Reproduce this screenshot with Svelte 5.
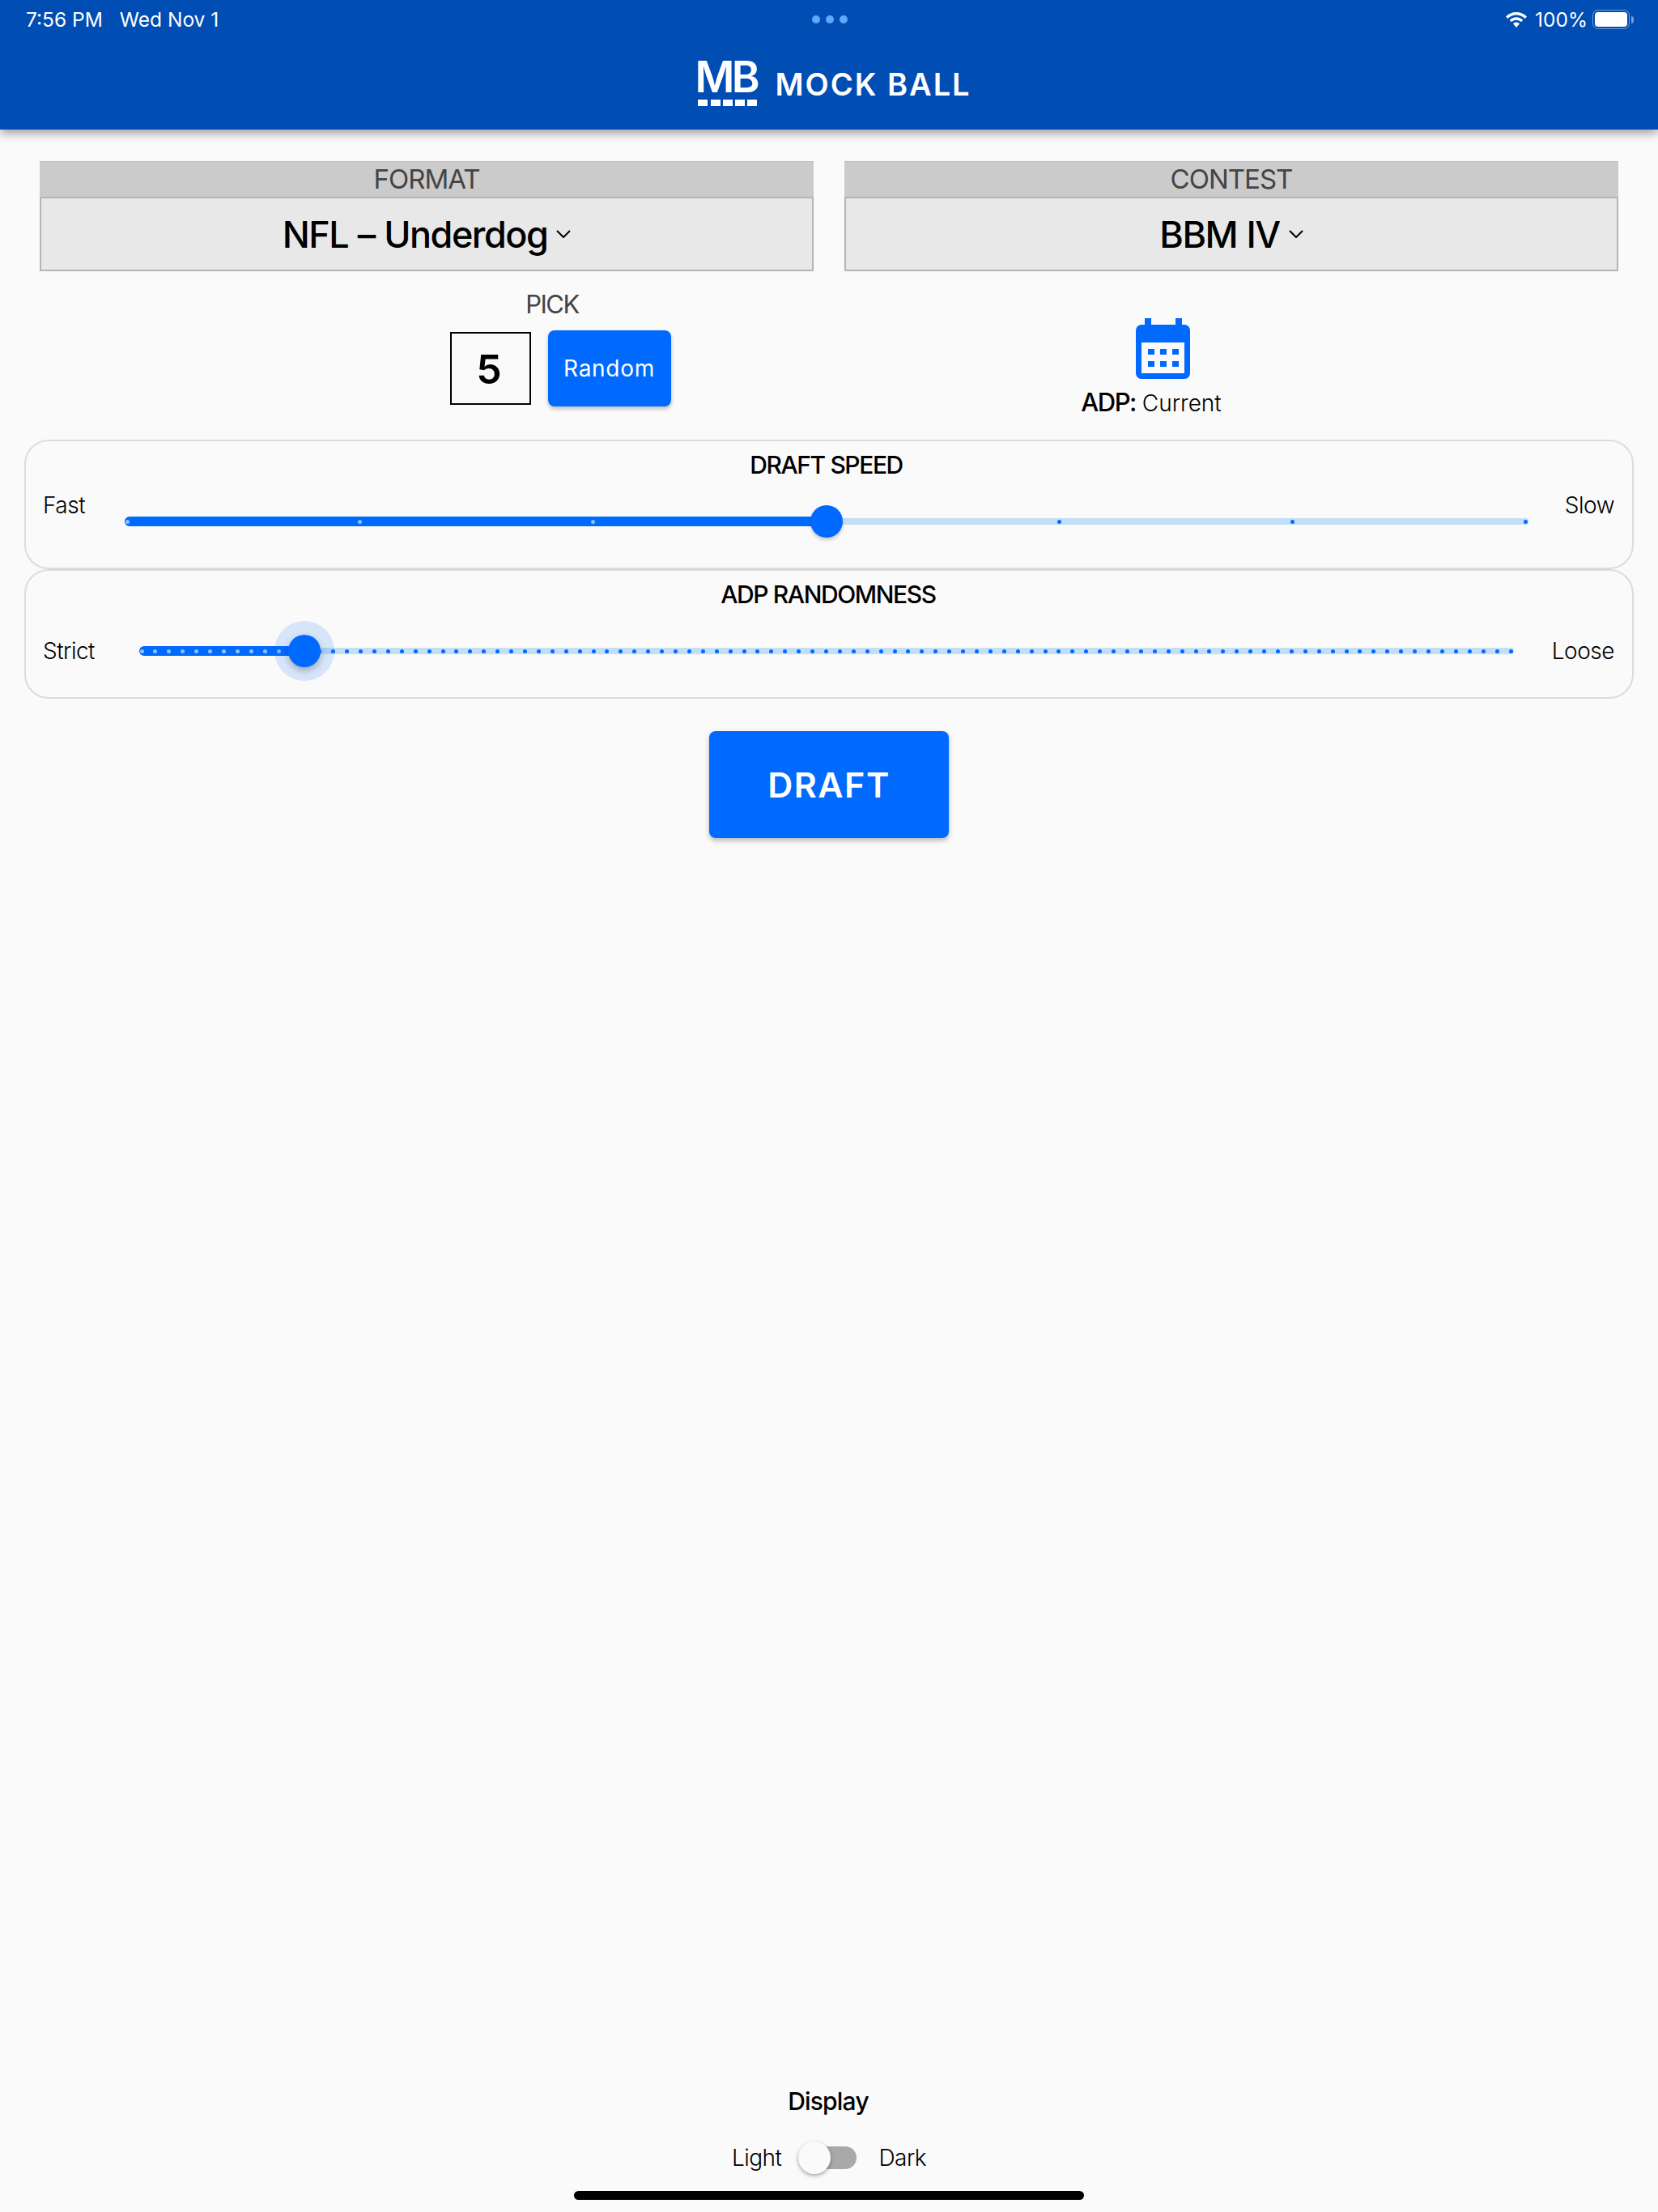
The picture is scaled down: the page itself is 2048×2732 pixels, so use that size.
<script>
	const sliders = [
		{ title: 'DRAFT SPEED', left: 'Fast', right: 'Slow', steps: 6, value: 3, cls: 'speed' },
		{ title: 'ADP RANDOMNESS', left: 'Strict', right: 'Loose', steps: 100, value: 12, cls: 'noise' }
	];

	function ticks(steps) {
		return Array.from({ length: steps + 1 }, (_, i) => i);
	}
</script>

<div class="page">
	<header class="appbar">
		<div class="status">
			<div class="status-left"><span>7:56 PM</span><span>Wed Nov 1</span></div>
			<div class="dots"><i></i><i></i><i></i></div>
			<div class="status-right">
				<svg width="26" height="19" viewBox="0 0 26 19" fill="#fff">
					<path d="M13 0C8 0 3.600 2 0 5.400l2.300 2.500C5.300 5 9 3.400 13 3.400s7.700 1.600 10.700 4.500L26 5.400C22.400 2 18 0 13 0z" />
					<path d="M13 6.300c-3.200 0-6 1.300-8.300 3.400l2.300 2.500c1.600-1.500 3.700-2.500 6-2.500s4.400 1 6 2.500l2.300-2.500C19 7.600 16.200 6.300 13 6.300z" />
					<path d="M13 12.600c-1.500 0-2.900.6-4 1.600l4 4.800 4-4.800c-1.100-1-2.500-1.600-4-1.600z" />
				</svg>
				<span class="pct">100%</span>
				<div class="battery"><div class="charge"></div></div>
				<div class="nub"></div>
			</div>
		</div>
		<div class="brand">
			<div class="logo">
				<span class="mb">MB</span>
				<div class="squares"><i></i><i></i><i></i><i></i><i></i></div>
			</div>
			<span class="name">MOCK BALL</span>
		</div>
	</header>

	<main>
		<div class="selects">
			<div class="select">
				<div class="select-label">FORMAT</div>
				<div class="select-value">
					<span>NFL – Underdog</span>
					<svg width="18" height="10" viewBox="0 0 18 10" fill="none" stroke="#000" stroke-width="2"><path d="M1 1l8 8 8-8" /></svg>
				</div>
			</div>
			<div class="select">
				<div class="select-label">CONTEST</div>
				<div class="select-value">
					<span>BBM IV</span>
					<svg width="18" height="10" viewBox="0 0 18 10" fill="none" stroke="#000" stroke-width="2"><path d="M1 1l8 8 8-8" /></svg>
				</div>
			</div>
		</div>

		<div class="options">
			<div class="pick">
				<div class="pick-label">PICK</div>
				<div class="pick-row">
					<div class="pick-input">5</div>
					<button class="random">Random</button>
				</div>
			</div>
			<div class="adp">
				<svg class="calendar" width="67" height="75" viewBox="0 0 67 75" fill="#006aff">
					<path fill-rule="evenodd" d="M11 0h8v8h30V0h8v8h3a7 7 0 0 1 7 7v53a7 7 0 0 1-7 7H7a7 7 0 0 1-7-7V15a7 7 0 0 1 7-7h4zM7 30v38h53V30z" />
					<path d="M15 38h8v7h-8zM30 38h8v7h-8zM45 38h8v7h-8zM15 53h8v7h-8zM30 53h8v7h-8zM45 53h8v7h-8z" />
				</svg>
				<div class="adp-text"><b>ADP:</b> Current</div>
			</div>
		</div>

		<div class="sliders">
			{#each sliders as s}
				<section class="card {s.cls}">
					<h3>{s.title}</h3>
					<div class="slider-row">
						<span class="end left">{s.left}</span>
						<div class="track">
							<div class="rail"></div>
							<div class="fill" style="width: {(s.value / s.steps) * 100}%"></div>
							<div class="ticks">
								{#each ticks(s.steps) as t}
									<i class:on={t <= s.value} style="left: {(t / s.steps) * 100}%"></i>
								{/each}
							</div>
							<div class="thumb" style="left: {(s.value / s.steps) * 100}%"></div>
						</div>
						<span class="end right">{s.right}</span>
					</div>
				</section>
			{/each}
		</div>

		<button class="draft">DRAFT</button>
	</main>

	<footer>
		<div class="display">Display</div>
		<div class="toggle-row">
			<span>Light</span>
			<div class="switch"><div class="knob"></div></div>
			<span>Dark</span>
		</div>
	</footer>

	<div class="home"></div>
</div>

<style>
	:global(body) {
		margin: 0;
		background: #fafafa;
	}

	.page {
		position: relative;
		display: flex;
		flex-direction: column;
		height: 2732px;
		overflow: hidden;
		background: #fafafa;
		color: #000;
		font-family: Inter, 'Liberation Sans', sans-serif;
	}

	.appbar {
		position: relative;
		height: 160px;
		background: #004db3;
		color: #fff;
		box-shadow: 0 4px 12px rgba(0, 0, 0, 0.4);
	}

	.status {
		display: grid;
		grid-template-columns: 1fr auto 1fr;
		align-items: center;
		height: 48px;
		padding: 0 30px 0 32px;
		font-size: 24.500px;
	}

	.status-left {
		display: flex;
		gap: 21px;
	}

	.dots {
		display: flex;
		gap: 7px;
	}

	.dots i {
		width: 10px;
		height: 10px;
		border-radius: 50%;
		background: #5fa8ff;
	}

	.status-right {
		display: flex;
		align-items: center;
		justify-content: flex-end;
	}

	.pct {
		margin: 0 6px 0 10px;
	}

	.battery {
		box-sizing: border-box;
		width: 46px;
		height: 24px;
		padding: 2px;
		border: 1.500px solid rgba(255, 255, 255, 0.45);
		border-radius: 7px;
	}

	.charge {
		height: 100%;
		border-radius: 4px;
		background: #fff;
	}

	.nub {
		width: 3px;
		height: 9px;
		margin-left: 2px;
		border-radius: 0 3px 3px 0;
		background: rgba(255, 255, 255, 0.45);
	}

	.brand {
		display: flex;
		align-items: center;
		justify-content: center;
		gap: 24px;
		margin-top: 25px;
		padding-left: 10px;
	}

	.logo {
		display: flex;
		flex-direction: column;
		width: 75px;
	}

	.mb {
		height: 46px;
		font-size: 53px;
		font-weight: 600;
		line-height: 44px;
		letter-spacing: -3.500px;
	}

	.squares {
		display: flex;
		justify-content: space-between;
		width: 73px;
		margin: 4px 0 0 4px;
	}

	.squares i {
		width: 12px;
		height: 8px;
		background: #fff;
	}

	.name {
		margin-top: 3px;
		font-size: 38px;
		font-weight: 600;
		letter-spacing: 2px;
	}

	main {
		display: flex;
		flex-direction: column;
		align-items: center;
	}

	.selects {
		display: grid;
		grid-template-columns: 1fr 1fr;
		gap: 38px;
		align-self: stretch;
		padding: 39px 49px 0;
	}

	.select-label {
		box-sizing: border-box;
		height: 44px;
		background: #cbcbcb;
		border-top: 1px solid #c0c0c0;
		color: #444;
		font-size: 33px;
		line-height: 43px;
		text-align: center;
		letter-spacing: -1px;
	}

	.select-value {
		display: flex;
		align-items: center;
		justify-content: center;
		gap: 11px;
		box-sizing: border-box;
		height: 92px;
		background: #e8e8e8;
		border: 2px solid #b4b4b4;
		font-size: 45px;
		font-weight: 500;
		letter-spacing: -1.500px;
		word-spacing: 1px;
	}

	.options {
		display: grid;
		grid-template-columns: 1fr 1fr;
		align-self: stretch;
		height: 208px;
	}

	.pick {
		display: flex;
		flex-direction: column;
		align-items: center;
		padding: 24px 0 0 360px;
	}

	.pick-label {
		margin-right: 20px;
		color: #444;
		font-size: 31px;
		line-height: 34px;
		letter-spacing: -1.500px;
	}

	.pick-row {
		display: flex;
		align-items: center;
		gap: 21px;
		margin-top: 15px;
	}

	.pick-input {
		box-sizing: border-box;
		width: 100px;
		height: 90px;
		padding-right: 3px;
		border: 2px solid #000;
		font-size: 50px;
		font-weight: 600;
		line-height: 88px;
		text-align: center;
	}

	.random {
		width: 152px;
		height: 94px;
		padding: 0;
		border: 0;
		border-radius: 8px;
		background: #006aff;
		box-shadow: 0 3px 5px rgba(0, 0, 0, 0.25);
		color: #fff;
		font: 400 28px Inter, 'Liberation Sans', sans-serif;
		letter-spacing: 0.700px;
	}

	.adp {
		display: flex;
		flex-direction: column;
		align-items: center;
		padding: 58px 228px 0 0;
	}

	.calendar {
		margin-left: 28px;
	}

	.adp-text {
		margin-top: 10px;
		font-size: 28px;
		font-weight: 300;
		line-height: 38px;
	}

	.adp-text b {
		font-size: 31px;
		font-weight: 500;
		letter-spacing: -1.500px;
	}

	.sliders {
		align-self: stretch;
		padding: 0 30px;
	}

	.card {
		box-sizing: border-box;
		height: 160px;
		border: 2px solid #dcdcdc;
		border-radius: 30px;
	}

	h3 {
		margin: 0;
		padding-top: 11px;
		font-size: 30px;
		font-weight: 500;
		line-height: 36px;
		text-align: center;
		letter-spacing: -1.400px;
	}

	.speed h3 {
		padding-right: 7px;
	}

	.noise h3 {
		padding-right: 2px;
	}

	.slider-row {
		display: flex;
		align-items: center;
		height: 104px;
		padding: 0 22px 0 21px;
		font-size: 28px;
		font-weight: 300;
		letter-spacing: -0.500px;
	}

	.end {
		flex: none;
		line-height: 40px;
	}

	.speed .end {
		margin-top: -40px;
	}

	.speed .left {
		width: 101px;
	}

	.speed .right {
		width: 106px;
	}

	.noise .left {
		width: 119px;
	}

	.noise .right {
		width: 124px;
	}

	.right {
		text-align: right;
	}

	.track {
		position: relative;
		flex: 1;
		height: 12px;
	}

	.rail {
		position: absolute;
		left: 0;
		right: 0;
		top: 2px;
		height: 8px;
		border-radius: 4px;
		background: #c2dff8;
	}

	.fill {
		position: absolute;
		left: 0;
		top: 0;
		height: 12px;
		border-radius: 6px 0 0 6px;
		background: #006aff;
	}

	.ticks {
		position: absolute;
		left: 3px;
		right: 4px;
		top: 4px;
	}

	.ticks i {
		position: absolute;
		width: 5px;
		height: 5px;
		margin-left: -2.500px;
		border-radius: 50%;
		background: #006aff;
	}

	.ticks i.on {
		background: #8fbfff;
	}

	.thumb {
		position: absolute;
		top: 6px;
		width: 40px;
		height: 40px;
		margin: -20px 0 0 -20px;
		border-radius: 50%;
		background: #006aff;
		box-shadow: 0 3px 4px rgba(0, 0, 0, 0.2);
	}

	.noise .thumb {
		box-shadow:
			0 4px 8px rgba(0, 0, 0, 0.28),
			0 0 0 17px rgba(0, 106, 255, 0.14);
	}

	.draft {
		width: 296px;
		height: 132px;
		margin-top: 40px;
		padding: 0;
		border: 0;
		border-radius: 8px;
		background: #006aff;
		box-shadow: 0 3px 6px rgba(0, 0, 0, 0.28);
		color: #fff;
		font: 600 43px Inter, 'Liberation Sans', sans-serif;
		letter-spacing: 1.500px;
	}

	footer {
		display: flex;
		flex-direction: column;
		align-items: center;
		margin-top: auto;
		padding-bottom: 47px;
		font-size: 28px;
	}

	.display {
		margin-bottom: 2px;
		padding-right: 2px;
		font-size: 30px;
		font-weight: 500;
		letter-spacing: -0.800px;
		line-height: 40px;
	}

	.toggle-row {
		display: flex;
		align-items: center;
		gap: 27px;
		margin-top: 28px;
		font-weight: 300;
		letter-spacing: -0.500px;
		line-height: 40px;
	}

	.switch {
		position: relative;
		width: 72px;
		height: 28px;
		margin-left: -6px;
		border-radius: 14px;
		background: #a9a9a9;
	}

	.knob {
		position: absolute;
		left: 0;
		top: -6px;
		width: 40px;
		height: 40px;
		border-radius: 50%;
		background: #fafafa;
		box-shadow: 0 2px 5px rgba(0, 0, 0, 0.35);
	}

	.home {
		position: absolute;
		left: 709px;
		top: 2706px;
		width: 630px;
		height: 11px;
		border-radius: 6px;
		background: #000;
	}
</style>
